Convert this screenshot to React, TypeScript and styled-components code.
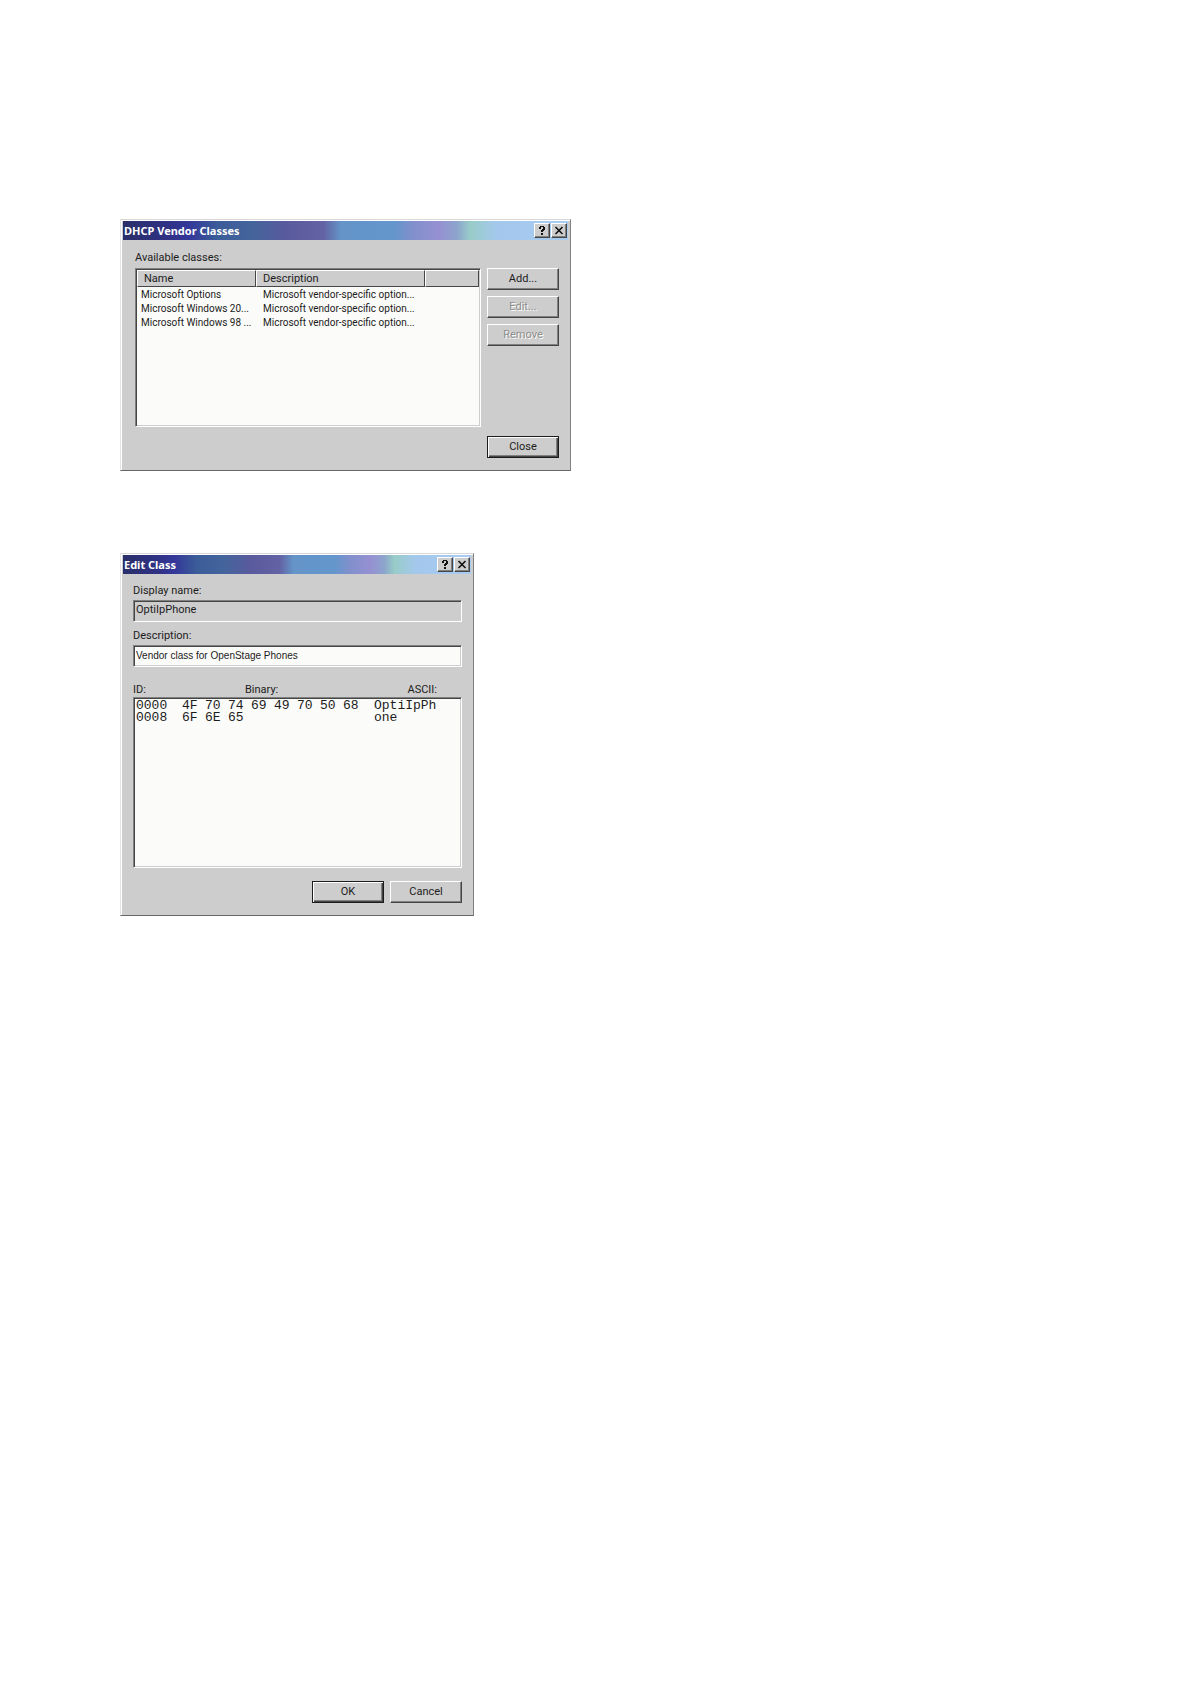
import React from 'react'
import styled, { createGlobalStyle } from 'styled-components'

const colors = {
  FACE: '#cdcdcd',
  WHITE: '#ffffff',
  PAPER: '#fbfbf9',
  SHADOW: '#808080',
  DARK: '#454545',
  BLACK: '#1c1c1c',
  DISABLED: '#8e8e8e',
}

const fonts = {
  UI: "Roboto, 'Liberation Sans', sans-serif",
  EDIT: "'Liberation Sans', sans-serif",
  CAPTION: "'Noto Sans', 'Open Sans', sans-serif",
  MONO: "'Liberation Mono', monospace",
}

const GlobalStyle = createGlobalStyle`
  *, *::before, *::after {
    box-sizing: border-box;
  }

  body {
    margin: 0;
    background: ${colors.WHITE};
    color: ${colors.BLACK};
    font-family: ${fonts.UI};
    font-size: 11px;
    line-height: 14px;
  }
`

const Page = styled.main`
  display: flex;
  flex-direction: column;
  align-items: flex-start;
  gap: 82px;
  padding: 219px 120px 120px;
`

const Dialog = styled.section<{ $width: number }>`
  width: 100%;
  max-width: ${({ $width }) => $width}px;
  background: ${colors.FACE};
  border: 1px solid;
  border-color: #d8d8d8 ${colors.SHADOW} #666666 #e4e4e4;
  box-shadow: inset 1px 1px 0 ${colors.WHITE};
  padding: 1px 2px 12px 2px;
`

const TitleBar = styled.header`
  display: flex;
  align-items: center;
  gap: 1px;
  height: 19px;
  padding: 0 1px;
  background: linear-gradient(
    90deg,
    #2a2f6a 0%,
    #2f3184 10%,
    #34389a 15%,
    #3a5c98 21%,
    #44649c 29%,
    #5a5a9e 37%,
    #6262a4 45%,
    #6494c8 49%,
    #6496cc 61%,
    #8090cc 65%,
    #9690d2 71%,
    #8ca4cc 75%,
    #98ccc8 78%,
    #a4c8ec 84%,
    #a8ccf2 100%
  );
`

const Title = styled.h2`
  flex: 1;
  margin: 0;
  color: ${colors.WHITE};
  font-family: ${fonts.CAPTION};
  font-size: 11px;
  font-weight: 700;
  line-height: 16px;
`

const CaptionButton = styled.button`
  display: flex;
  align-items: center;
  justify-content: center;
  width: 16px;
  height: 15px;
  padding: 0;
  background: ${colors.FACE};
  border: 1px solid;
  border-color: ${colors.WHITE} ${colors.DARK} ${colors.DARK} ${colors.WHITE};
  box-shadow: inset -1px -1px 0 ${colors.SHADOW};
`

const Row = styled.div`
  display: flex;
  gap: 6px;
`

const Actions = styled(Row)`
  justify-content: flex-end;
`

const Button = styled.button<{ $primary?: boolean }>`
  width: 72px;
  height: 22px;
  padding: 0;
  background: ${colors.FACE};
  color: ${colors.BLACK};
  font-family: ${fonts.UI};
  font-size: 11px;
  line-height: 14px;
  border: 1px solid;
  border-color: ${({ $primary }) =>
    $primary ? colors.BLACK : `${colors.WHITE} ${colors.DARK} ${colors.DARK} ${colors.WHITE}`};
  box-shadow: ${({ $primary }) =>
    $primary
      ? `inset 1px 1px 0 ${colors.WHITE}, inset -1px -1px 0 ${colors.DARK}, inset -2px -2px 0 ${colors.SHADOW}`
      : `inset -1px -1px 0 ${colors.SHADOW}`};

  &:disabled {
    color: ${colors.DISABLED};
    text-shadow: 1px 1px 0 ${colors.WHITE};
  }
`

const sunken = `
  border: 1px solid;
  border-color: ${colors.SHADOW} ${colors.WHITE} ${colors.WHITE} ${colors.SHADOW};
  box-shadow: inset 1px 1px 0 ${colors.DARK}, inset -1px -1px 0 ${colors.FACE};
`

const ClassesBody = styled.div`
  display: flex;
  flex-direction: column;
  padding: 11px 9px 0 12px;
`

const ListLabel = styled.div`
  margin-bottom: 3px;
`

const ClassList = styled.div`
  ${sunken}
  flex: 1;
  height: 159px;
  margin-bottom: 9px;
  padding: 1px;
  background: ${colors.PAPER};
`

const ListTable = styled.table`
  width: 100%;
  table-layout: fixed;
  border-collapse: separate;
  border-spacing: 0;

  th {
    height: 17px;
    padding: 0 0 0 6px;
    background: ${colors.FACE};
    border: 1px solid;
    border-color: ${colors.WHITE} ${colors.DARK} ${colors.DARK} ${colors.WHITE};
    font-weight: 400;
    text-align: left;
  }

  td {
    padding: 0 0 0 7px;
    font-size: 10px;
    white-space: nowrap;
  }

  tbody::before {
    content: '';
    display: block;
    height: 1px;
  }

  td:first-child {
    padding-left: 4px;
  }
`

const ButtonColumn = styled.div`
  display: flex;
  flex-direction: column;
  gap: 6px;
`

const EditBody = styled.div`
  display: flex;
  flex-direction: column;
  padding: 10px 9px 0 10px;
`

const Field = styled.div`
  display: flex;
  flex-direction: column;
  gap: 2px;
  margin-bottom: 7px;
`

const TextInput = styled.input`
  ${sunken}
  width: 100%;
  height: 22px;
  margin: 0;
  padding: 0 2px 2px;
  outline: none;
  background: ${colors.PAPER};
  color: ${colors.BLACK};
  font-family: ${fonts.EDIT};
  font-size: 10px;

  &:read-only {
    padding-bottom: 4px;
    background: ${colors.FACE};
    font-family: ${fonts.UI};
    font-size: 11px;
  }
`

const HexLabels = styled.div`
  display: grid;
  grid-template-columns: 112px 1fr auto;
  padding: 9px 25px 0 0;
`

const HexView = styled.div`
  ${sunken}
  height: 171px;
  margin-bottom: 13px;
  padding: 2px;
  background: ${colors.PAPER};
`

const HexTable = styled.table`
  border-collapse: collapse;
  table-layout: fixed;
  font-family: ${fonts.MONO};
  font-size: 13px;
  line-height: 12px;

  td {
    width: 23px;
    padding: 0;
  }

  td:first-child {
    width: 46px;
  }

  td:last-child {
    width: 76px;
    padding-left: 8px;
  }
`

const HelpIcon = () => (
  <svg width='12' height='11' viewBox='0 0 12 11' shapeRendering='crispEdges' aria-hidden='true'>
    <path
      d='M4 1h4v1h1v3h-1v1h-1v1h-2v-2h1v-1h1v-2h-2v2h-2v-2h1zM5 8h2v2h-2z'
      fill='#111'
    />
  </svg>
)

const CloseIcon = () => (
  <svg width='12' height='11' viewBox='0 0 12 11' aria-hidden='true'>
    <path d='M2.5 2L9.5 9M9.5 2L2.5 9' fill='none' stroke='#111' strokeWidth='1.6' />
  </svg>
)

interface CaptionProps {
  title: string
}

const Caption: React.FC<CaptionProps> = ({ title }) => (
  <TitleBar>
    <Title>{title}</Title>
    <CaptionButton aria-label='Help'>
      <HelpIcon />
    </CaptionButton>
    <CaptionButton aria-label='Close window'>
      <CloseIcon />
    </CaptionButton>
  </TitleBar>
)

const classes = [
  { name: 'Microsoft Options', description: 'Microsoft vendor-specific option...' },
  { name: 'Microsoft Windows 20...', description: 'Microsoft vendor-specific option...' },
  { name: 'Microsoft Windows 98 ...', description: 'Microsoft vendor-specific option...' },
]

const dump = [
  { offset: '0000', bytes: ['4F', '70', '74', '69', '49', '70', '50', '68'], ascii: 'OptiIpPh' },
  { offset: '0008', bytes: ['6F', '6E', '65', '', '', '', '', ''], ascii: 'one' },
]

const VendorClassesDialog: React.FC = () => (
  <Dialog $width={451}>
    <Caption title='DHCP Vendor Classes' />
    <ClassesBody>
      <ListLabel id='classes-label'>Available classes:</ListLabel>
      <Row>
        <ClassList>
          <ListTable aria-labelledby='classes-label'>
            <colgroup>
              <col width='119' />
              <col width='169' />
              <col />
            </colgroup>
            <thead>
              <tr>
                <th>Name</th>
                <th>Description</th>
                <th aria-label='Blank' />
              </tr>
            </thead>
            <tbody>
              {classes.map((item) => (
                <tr key={item.name}>
                  <td>{item.name}</td>
                  <td>{item.description}</td>
                  <td />
                </tr>
              ))}
            </tbody>
          </ListTable>
        </ClassList>
        <ButtonColumn>
          <Button>Add...</Button>
          <Button disabled>Edit...</Button>
          <Button disabled>Remove</Button>
        </ButtonColumn>
      </Row>
      <Actions>
        <Button $primary>Close</Button>
      </Actions>
    </ClassesBody>
  </Dialog>
)

const EditClassDialog: React.FC = () => (
  <Dialog $width={354}>
    <Caption title='Edit Class' />
    <EditBody>
      <Field>
        <label htmlFor='display-name'>Display name:</label>
        <TextInput id='display-name' defaultValue='OptiIpPhone' readOnly />
      </Field>
      <Field>
        <label htmlFor='description'>Description:</label>
        <TextInput id='description' defaultValue='Vendor class for OpenStage Phones' />
      </Field>
      <HexLabels>
        <span>ID:</span>
        <span>Binary:</span>
        <span>ASCII:</span>
      </HexLabels>
      <HexView>
        <HexTable>
          <tbody>
            {dump.map((line) => (
              <tr key={line.offset}>
                <td>{line.offset}</td>
                {line.bytes.map((byte, index) => (
                  <td key={index}>{byte}</td>
                ))}
                <td>{line.ascii}</td>
              </tr>
            ))}
          </tbody>
        </HexTable>
      </HexView>
      <Actions>
        <Button $primary>OK</Button>
        <Button>Cancel</Button>
      </Actions>
    </EditBody>
  </Dialog>
)

const App: React.FC = () => {
  return (
    <>
      <GlobalStyle />
      <Page>
        <VendorClassesDialog />
        <EditClassDialog />
      </Page>
    </>
  )
}

export default App
